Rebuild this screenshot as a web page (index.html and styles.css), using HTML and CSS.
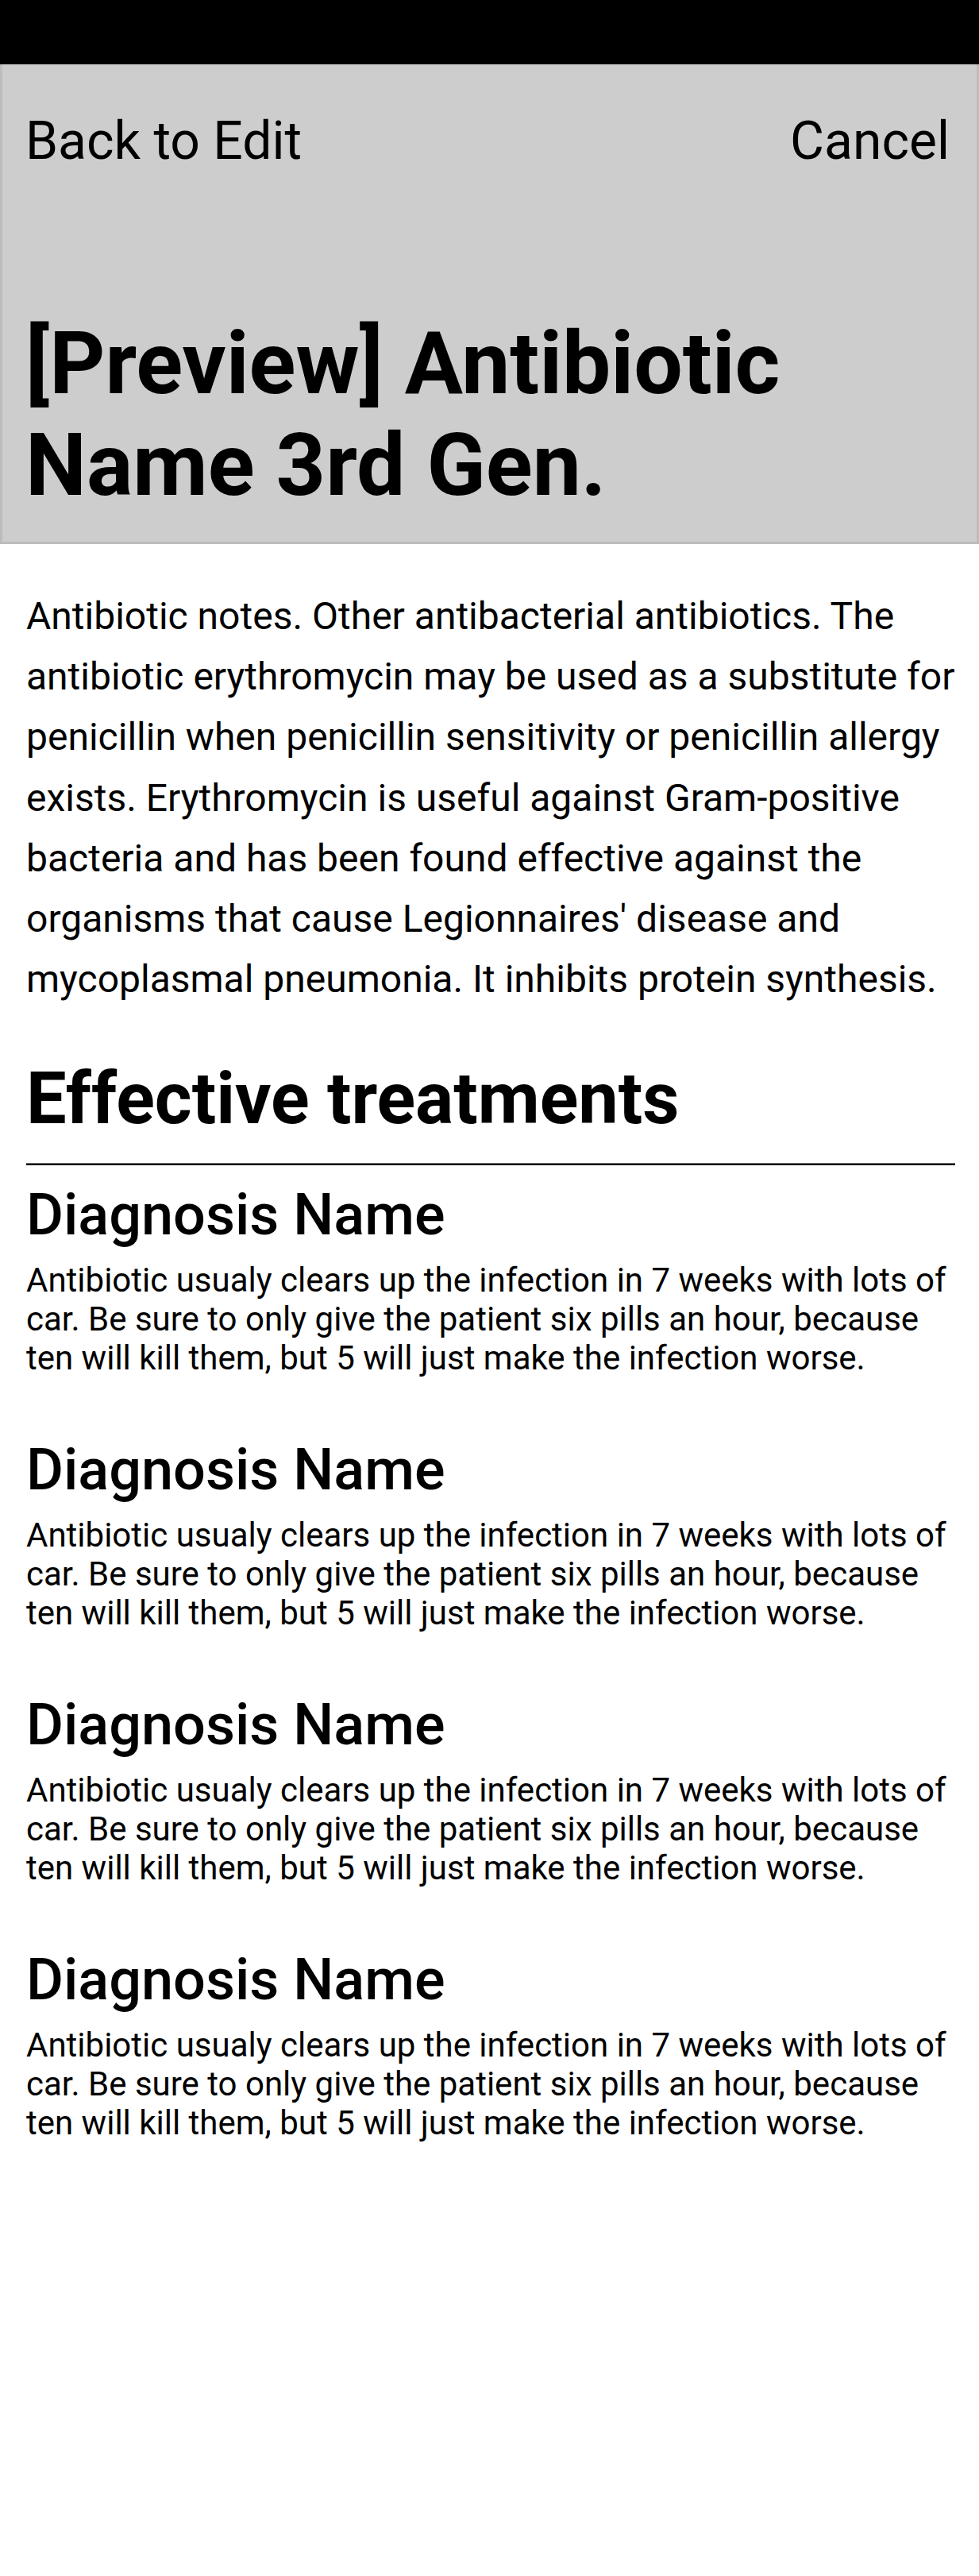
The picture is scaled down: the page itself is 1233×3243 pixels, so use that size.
FILE: index.html
```html
<!DOCTYPE html>
<html lang="en">
<head>
<meta charset="utf-8">
<title>Preview</title>
<link rel="stylesheet" href="styles.css">
</head>
<body>
<div class="statusbar"></div>
<header class="header">
  <nav class="nav">
    <a class="nav-link">Back to Edit</a>
    <a class="nav-link">Cancel</a>
  </nav>
  <h1 class="title">[Preview] Antibiotic Name 3rd Gen.</h1>
</header>
<main class="content">
  <p class="notes">Antibiotic notes. Other antibacterial antibiotics. The antibiotic erythromycin may be used as a substitute for penicillin when penicillin sensitivity or penicillin allergy exists. Erythromycin is useful against Gram-positive bacteria and has been found effective against the organisms that cause Legionnaires' disease and mycoplasmal pneumonia. It inhibits protein synthesis.</p>
  <h2 class="section-title">Effective treatments</h2>
  <div class="rule"></div>
  <section class="treatment">
    <h3 class="treatment-name">Diagnosis Name</h3>
    <p class="treatment-text">Antibiotic usualy clears up the infection in 7 weeks with lots of car. Be sure to only give the patient six pills an hour, because ten will kill them, but 5 will just make the infection worse.</p>
  </section>
  <section class="treatment">
    <h3 class="treatment-name">Diagnosis Name</h3>
    <p class="treatment-text">Antibiotic usualy clears up the infection in 7 weeks with lots of car. Be sure to only give the patient six pills an hour, because ten will kill them, but 5 will just make the infection worse.</p>
  </section>
  <section class="treatment">
    <h3 class="treatment-name">Diagnosis Name</h3>
    <p class="treatment-text">Antibiotic usualy clears up the infection in 7 weeks with lots of car. Be sure to only give the patient six pills an hour, because ten will kill them, but 5 will just make the infection worse.</p>
  </section>
  <section class="treatment">
    <h3 class="treatment-name">Diagnosis Name</h3>
    <p class="treatment-text">Antibiotic usualy clears up the infection in 7 weeks with lots of car. Be sure to only give the patient six pills an hour, because ten will kill them, but 5 will just make the infection worse.</p>
  </section>
</main>
</body>
</html>
```
FILE: styles.css
```css
html, body {
  margin: 0;
  padding: 0;
  background: #ffffff;
}
body {
  font-family: Roboto, "Noto Sans", "Liberation Sans", sans-serif;
  color: #000000;
}
.statusbar {
  height: 81px;
  background: #000000;
}
.header {
  background: #cdcdcd;
  border: 3px solid #bdbdbd;
  border-top: none;
  padding: 58px 34px 32px 29px;
}
.nav {
  display: flex;
  justify-content: space-between;
  align-items: baseline;
}
.nav-link {
  font-size: 66px;
  line-height: normal;
  color: #000000;
}
.title {
  margin: 178px 0 0;
  font-size: 109px;
  font-weight: 700;
  line-height: normal;
}
.content {
  padding: 0 30px 0 33px;
}
.notes {
  margin: 53px 0 0;
  font-size: 48px;
  line-height: 76.2px;
}
.section-title {
  margin: 60px 0 0;
  font-size: 90px;
  font-weight: 700;
  line-height: normal;
}
.rule {
  margin-top: 28px;
  height: 3px;
  background: #000000;
  border-top: 1px solid #777777;
  box-sizing: border-box;
}
.treatment {
  margin-top: 20px;
  margin-bottom: 74px;
}
.treatment-name {
  margin: 0;
  font-size: 72px;
  font-weight: 500;
  line-height: normal;
}
.treatment-text {
  margin: 15px 0 0;
  font-size: 42px;
  line-height: normal;
}
```
